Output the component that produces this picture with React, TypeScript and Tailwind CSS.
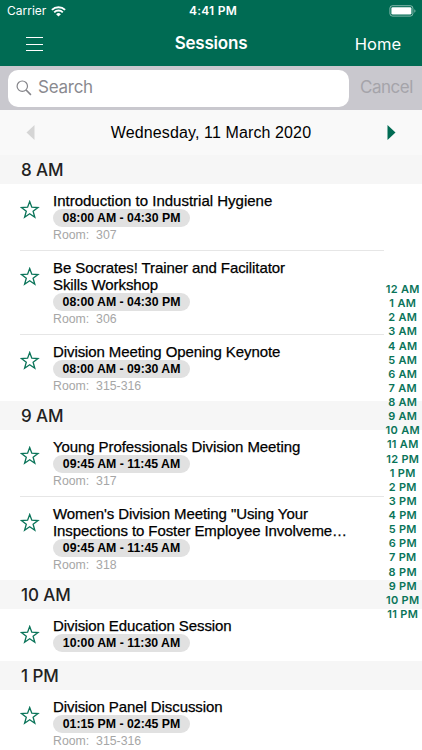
type Session = { title: string[]; time: string; room?: string; height: string; tracking?: string };
type Group = { label: string; head: string; sessions: Session[] };

const groups: Group[] = [
  {
    label: '8 AM',
    head: 'h-[29px]',
    sessions: [
      { title: ['Introduction to Industrial Hygiene'], time: '08:00 AM - 04:30 PM', room: '307', height: 'h-[67px]', tracking: 'tracking-normal' },
      { title: ['Be Socrates! Trainer and Facilitator', 'Skills Workshop'], time: '08:00 AM - 04:30 PM', room: '306', height: 'h-[84px]' },
      { title: ['Division Meeting Opening Keynote'], time: '08:00 AM - 09:30 AM', room: '315-316', height: 'h-[66px]' },
    ],
  },
  {
    label: '9 AM',
    head: 'h-[29px]',
    sessions: [
      { title: ['Young Professionals Division Meeting'], time: '09:45 AM - 11:45 AM', room: '317', height: 'h-[67px]' },
      { title: ['Women\'s Division Meeting "Using Your', 'Inspections to Foster Employee Involveme…'], time: '09:45 AM - 11:45 AM', room: '318', height: 'h-[83px]' },
    ],
  },
  {
    label: '10 AM',
    head: 'h-[29px]',
    sessions: [{ title: ['Division Education Session'], time: '10:00 AM - 11:30 AM', height: 'h-[52px]' }],
  },
  {
    label: '1 PM',
    head: 'h-[29px]',
    sessions: [{ title: ['Division Panel Discussion'], time: '01:15 PM - 02:45 PM', room: '315-316', height: 'h-[67px]' }],
  },
];

const hours = ['AM', 'PM'].flatMap((half) => [12, 1, 2, 3, 4, 5, 6, 7, 8, 9, 10, 11].map((n) => `${n} ${half}`));

function StatusBar() {
  return (
    <div className="grid h-[22px] grid-cols-3 items-center pl-[7px] pr-[6px] text-[12px] leading-none">
      <div className="flex items-center gap-[5px]">
        <span>Carrier</span>
        <svg width="15" height="11" viewBox="0 0 15 11" fill="none" stroke="#fff" strokeWidth="1.9">
          <path d="M.9 3.9a9.4 9.4 0 0 1 13.2 0" />
          <path d="M3.2 6.3a6.1 6.1 0 0 1 8.6 0" />
          <path d="M7.5 10.6 5.1 8.2a3.4 3.4 0 0 1 4.8 0z" fill="#fff" stroke="none" />
        </svg>
      </div>
      <div className="pl-[3px] text-center font-semibold tracking-[0.25px]">4:41 PM</div>
      <div className="flex justify-end">
        <svg width="27" height="12" viewBox="0 0 27 12">
          <rect x=".9" y=".7" width="23" height="10.4" rx="2.6" fill="none" stroke="#fff" strokeOpacity=".5" />
          <rect x="2.4" y="2.2" width="20" height="7.4" rx="1.3" fill="#fff" />
          <path d="M25.3 4.2c1.6.5 1.6 3 0 3.5z" fill="#fff" fillOpacity=".5" />
        </svg>
      </div>
    </div>
  );
}

function Star() {
  return (
    <svg className="mt-[16px] shrink-0" width="20" height="19" viewBox="0 0 20 19" fill="none" stroke="#0a7459" strokeWidth="1.3">
      <path d="M9.7 1.5 11.8 7.2 18 7.5 13.1 11.3 14.8 17.2 9.7 13.8 4.6 17.2 6.3 11.3 1.4 7.5 7.6 7.2Z" />
    </svg>
  );
}

function SessionRow({ session, divided }: { session: Session; divided: boolean }) {
  return (
    <div className={`ml-5 mr-[38px] flex ${session.height} ${divided ? 'border-b border-[#e6e6e6]' : ''}`}>
      <Star />
      <div className="ml-[13px] flex flex-col items-start whitespace-nowrap pt-[9px] font-['Liberation_Sans',Arial,sans-serif]">
        {session.title.map((line) => (
          <div
            key={line}
            className={`h-[17px] text-[15px] leading-[16px] text-black [-webkit-text-stroke:0.25px_#000] ${session.tracking ?? 'tracking-[-0.09px]'}`}
          >
            {line}
          </div>
        ))}
        <div className="-mt-[0.6px] h-[18px] w-[137px] rounded-full bg-[#e1e1e1] text-center text-[12.3px] font-bold leading-[19px] text-black">
          {session.time}
        </div>
        {session.room && (
          <div className="whitespace-pre text-[12.3px] leading-[17px] text-[#a6a6a6]">{`Room:  ${session.room}`}</div>
        )}
      </div>
    </div>
  );
}

export default function App() {
  return (
    <div className="relative h-[750px] w-[422px] overflow-hidden bg-white font-[Inter,sans-serif] text-black">
      <header className="h-[66px] bg-[#006b53] text-white">
        <StatusBar />
        <div className="grid h-11 grid-cols-3 items-center pl-[26px] pr-[21px]">
          <div className="flex w-4 flex-col gap-[5.5px]">
            <span className="h-px w-[17px] bg-white" />
            <span className="h-px w-[17px] bg-white" />
            <span className="h-px w-[17px] bg-white" />
          </div>
          <h1 className="pr-[5px] text-center text-[17px] font-semibold tracking-[-0.2px]">Sessions</h1>
          <div className="text-right text-[16.5px]">Home</div>
        </div>
      </header>

      <div className="flex h-11 items-center bg-[#c9c8ce] pl-2 pr-[9px]">
        <div className="flex h-[37px] w-[341px] items-center rounded-[10px] bg-white pl-2 text-[17px] text-[#8a8a8f]">
          <svg width="16" height="16" viewBox="0 0 16 16" fill="none" stroke="#85858a" strokeWidth="1.2">
            <circle cx="6.3" cy="6.2" r="5.2" />
            <path d="m10.1 10 4.8 4.9" strokeWidth="1.6" />
          </svg>
          <span className="ml-[6px] tracking-[-0.25px]">Search</span>
        </div>
        <span className="ml-auto text-[17px] tracking-[-0.45px] text-[#a5a4aa]">Cancel</span>
      </div>

      <div className="flex h-[45px] items-center justify-between bg-[#f9f9f9] pl-[26px] pr-[26px] font-['Liberation_Sans',Arial,sans-serif]">
        <svg width="9" height="15" viewBox="0 0 9 15"><path d="M8.5 0v15L.5 7.5z" fill="#d5d5d5" /></svg>
        <span className="text-[16px] tracking-[0.12px]">Wednesday, 11 March 2020</span>
        <svg width="9" height="15" viewBox="0 0 9 15"><path d="M.5 0v15l8-7.5z" fill="#006b53" /></svg>
      </div>

      <main>
        {groups.map((group) => (
          <section key={group.label}>
            <h2 className={`flex items-center bg-[#f6f6f6] pl-[21px] pt-[2px] text-[17px] font-medium tracking-[-0.1px] text-[#222] ${group.head}`}>{group.label}</h2>
            {group.sessions.map((session, i) => (
              <SessionRow key={session.title[0]} session={session} divided={i < group.sessions.length - 1} />
            ))}
          </section>
        ))}
      </main>

      <nav className="absolute right-0 top-[282px] flex w-[38.5px] flex-col text-center text-[11px] font-semibold tracking-[0.3px] text-[#0a7459]">
        {hours.map((hour) => (
          <span key={hour} className="h-[14.13px] whitespace-nowrap leading-[14.13px]">{hour}</span>
        ))}
      </nav>
    </div>
  );
}
